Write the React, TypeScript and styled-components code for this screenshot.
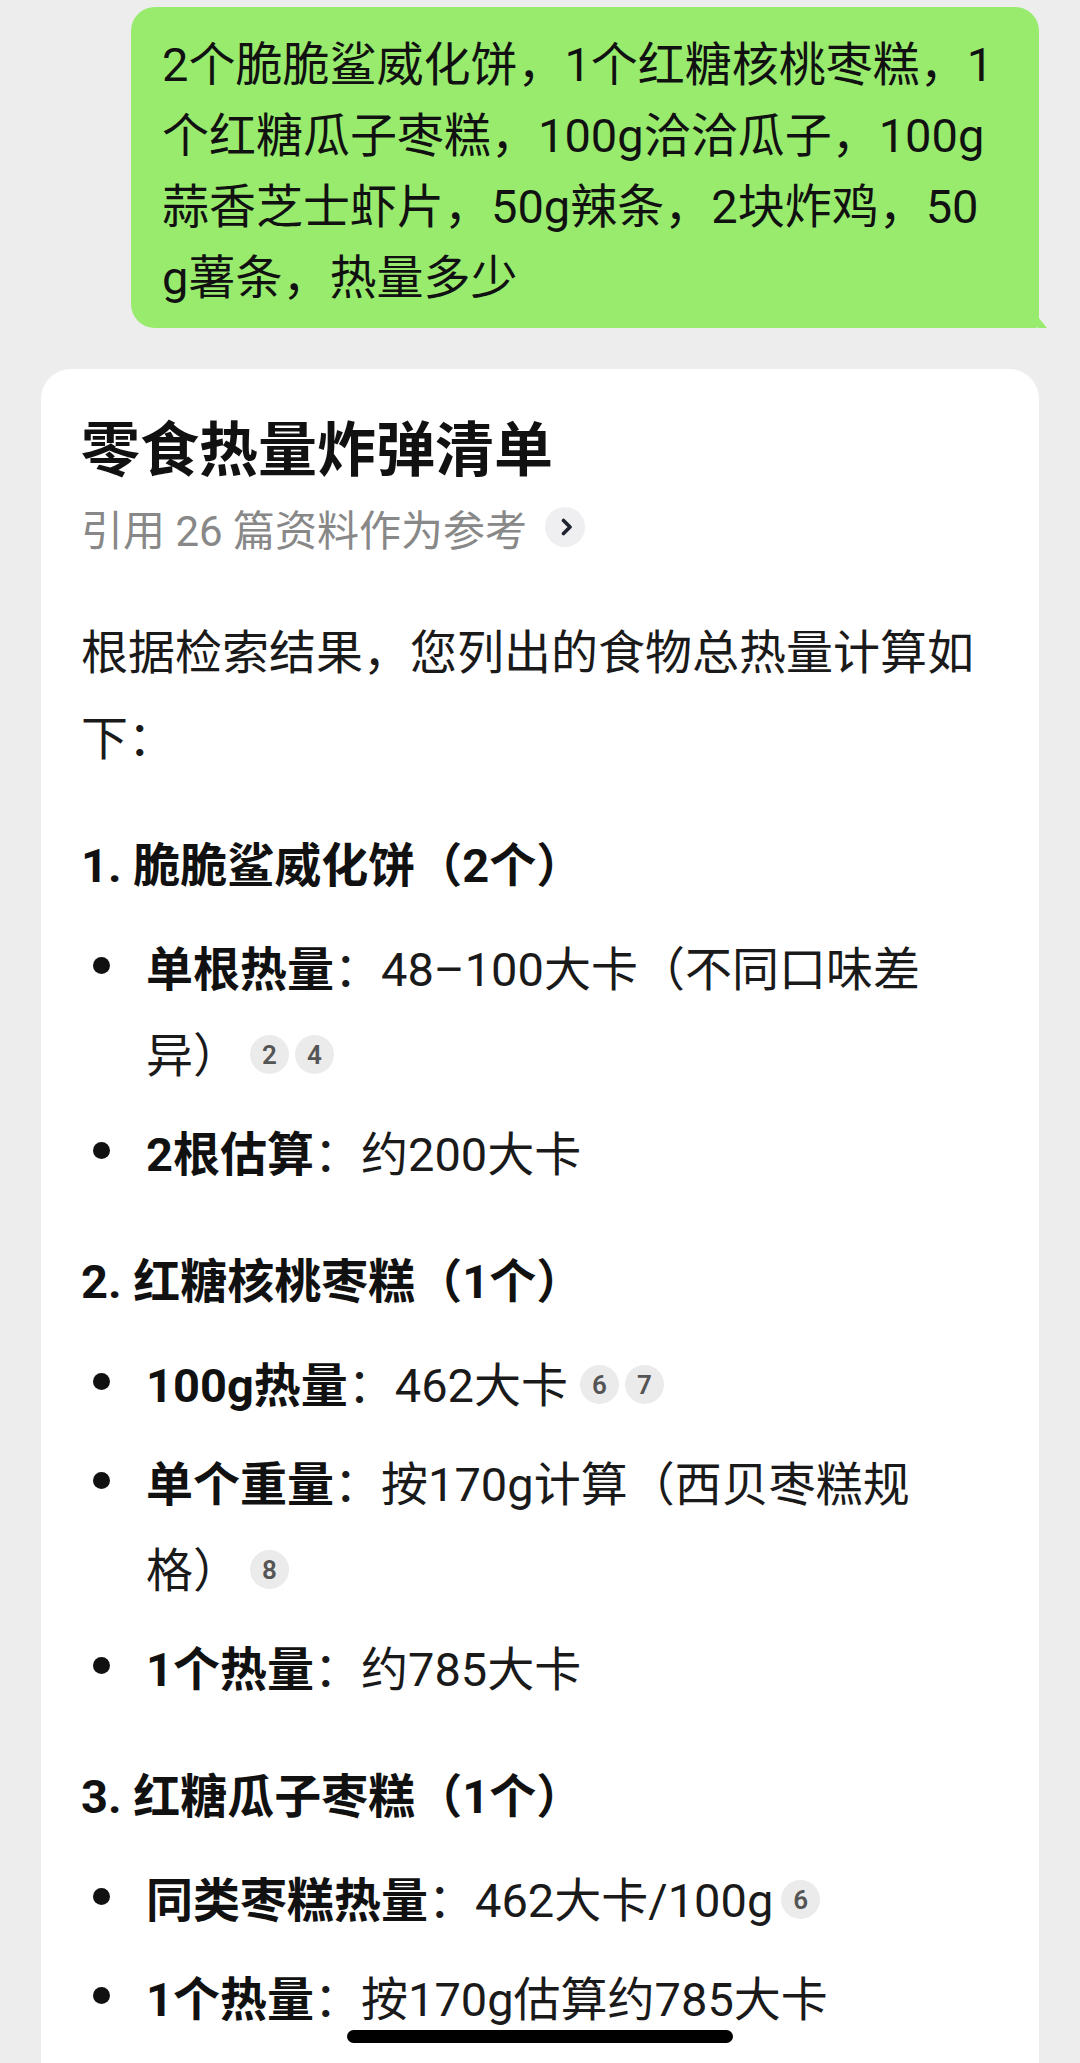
import React from "react";
import styled, { createGlobalStyle } from "styled-components";

const GlobalStyle = createGlobalStyle`
  html, body {
    margin: 0;
    padding: 0;
    background: #ededed;
  }
  body {
    font-family: Roboto, "Noto Sans CJK SC", "Noto Sans", sans-serif;
    -webkit-font-smoothing: antialiased;
  }
`;

const Page = styled.div`
  width: 1080px;
  height: 2063px;
  overflow: hidden;
  box-sizing: border-box;
  padding: 7px 41px 0;
  display: flex;
  flex-direction: column;
`;

const Bubble = styled.div`
  position: relative;
  align-self: flex-end;
  width: 908px;
  box-sizing: border-box;
  padding: 22px 24px 15px 31px;
  background: #98eb6d;
  border-radius: 24px 24px 4px 24px;
  color: #111;
  font-size: 47px;
  line-height: 71px;
  &::after {
    content: "";
    position: absolute;
    right: -8px;
    bottom: 0;
    width: 9px;
    height: 11px;
    background: #98eb6d;
    clip-path: polygon(0 0, 100% 100%, 0 100%);
  }
`;

const Card = styled.div`
  margin-top: 41px;
  background: #fff;
  border-radius: 30px;
  padding: 41px 40px 80px;
  color: #1a1a1a;
`;

const Title = styled.h1`
  margin: 0;
  font-size: 59px;
  line-height: 82px;
  font-weight: 700;
  color: #111;
`;

const SubRow = styled.div`
  margin-top: 7px;
  height: 56px;
  display: flex;
  align-items: center;
  gap: 18px;
  font-size: 42px;
  color: #888;
`;

const ChevronBtn = styled.span`
  width: 40px;
  height: 40px;
  border-radius: 50%;
  background: #efeff1;
  display: flex;
  align-items: center;
  justify-content: center;
  padding-left: 3px;
  box-sizing: border-box;
`;

const Para = styled.p`
  margin: 55px 0 0;
  font-size: 47px;
  line-height: 86px;
`;

const Heading = styled.h3`
  margin: 41px 0 0;
  font-size: 47px;
  line-height: 86px;
  font-weight: 700;
  color: #111;
`;

const List = styled.ul`
  list-style: none;
  margin: 18px 0 0;
  padding: 0;
  display: flex;
  flex-direction: column;
  gap: 13px;
`;

const Item = styled.li`
  display: flex;
  font-size: 47px;
  line-height: 86px;
`;

const Marker = styled.span`
  flex: none;
  width: 65px;
  height: 86px;
  display: flex;
  align-items: center;
  padding-left: 12px;
  box-sizing: border-box;
  &::before {
    content: "";
    width: 17px;
    height: 17px;
    border-radius: 50%;
    background: #111;
    margin-top: -10px;
  }
`;

const Body = styled.span`
  flex: 1;
`;

const Label = styled.strong`
  font-weight: 700;
  color: #111;
`;

const Cites = styled.span<{ $gap: number }>`
  display: inline-flex;
  gap: 6px;
  margin-left: ${(p) => p.$gap}px;
  vertical-align: middle;
  transform: translateY(-5px);
`;

const Badge = styled.span`
  width: 39px;
  height: 39px;
  border-radius: 50%;
  background: #ebebeb;
  color: #555;
  font-size: 26px;
  font-weight: 600;
  line-height: 1;
  display: flex;
  align-items: center;
  justify-content: center;
`;

const HomeBar = styled.div`
  position: fixed;
  left: 347px;
  bottom: 20px;
  width: 386px;
  height: 13px;
  border-radius: 7px;
  background: #000;
`;

const Refs: React.FC<{ nums: number[]; gap?: number }> = ({ nums, gap = 10 }) => (
  <Cites $gap={gap}>
    {nums.map((n) => (
      <Badge key={n}>{n}</Badge>
    ))}
  </Cites>
);

const Bullet: React.FC<{ children: React.ReactNode }> = ({ children }) => (
  <Item>
    <Marker />
    <Body>{children}</Body>
  </Item>
);

export default function App() {
  return (
    <>
      <GlobalStyle />
      <Page>
        <Bubble>
          2个脆脆鲨威化饼，1个红糖核桃枣糕，1
          <br />
          个红糖瓜子枣糕，100g洽洽瓜子，100g
          <br />
          蒜香芝士虾片，50g辣条，2块炸鸡，50
          <br />
          g薯条，热量多少
        </Bubble>

        <Card>
          <Title>零食热量炸弹清单</Title>
          <SubRow>
            <span>引用 26 篇资料作为参考</span>
            <ChevronBtn>
              <svg width="12" height="18" viewBox="0 0 12 18">
                <path d="M2.5 2.5 L9 9 L2.5 15.5" fill="none" stroke="#1f2430" strokeWidth="3.6" strokeLinecap="round" strokeLinejoin="round" />
              </svg>
            </ChevronBtn>
          </SubRow>

          <Para>
            根据检索结果，您列出的食物总热量计算如
            <br />
            下：
          </Para>

          <Heading>1. 脆脆鲨威化饼（2个）</Heading>
          <List>
            <Bullet>
              <Label>单根热量</Label>：48–100大卡（不同口味差
              <br />
              异）
              <Refs nums={[2, 4]} />
            </Bullet>
            <Bullet>
              <Label>2根估算</Label>：约200大卡
            </Bullet>
          </List>

          <Heading>2. 红糖核桃枣糕（1个）</Heading>
          <List>
            <Bullet>
              <Label>100g热量</Label>：462大卡
              <Refs nums={[6, 7]} gap={12} />
            </Bullet>
            <Bullet>
              <Label>单个重量</Label>：按170g计算（西贝枣糕规
              <br />
              格）
              <Refs nums={[8]} />
            </Bullet>
            <Bullet>
              <Label>1个热量</Label>：约785大卡
            </Bullet>
          </List>

          <Heading>3. 红糖瓜子枣糕（1个）</Heading>
          <List>
            <Bullet>
              <Label>同类枣糕热量</Label>：462大卡/100g
              <Refs nums={[6]} gap={8} />
            </Bullet>
            <Bullet>
              <Label>1个热量</Label>：按170g估算约785大卡
            </Bullet>
          </List>
        </Card>
      </Page>
      <HomeBar />
    </>
  );
}
